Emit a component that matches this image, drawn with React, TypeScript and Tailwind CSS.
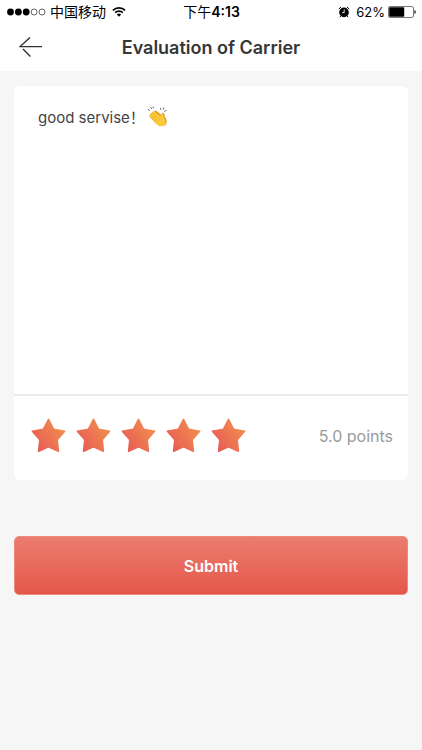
import { useState } from 'react';

const SCORES = [1, 2, 3, 4, 5];

function StatusBar() {
  return (
    <div className="grid h-6 grid-cols-[1fr_auto_1fr] items-center pr-1.5 pl-[7px] text-sm leading-6 text-black">
      <div className="flex items-center">
        <svg width="39" height="8" viewBox="0 0 39 8" aria-hidden="true">
          <circle cx="3.5" cy="4" r="3.4" />
          <circle cx="11.4" cy="4" r="3.4" />
          <circle cx="19.2" cy="4" r="3.4" />
          <circle cx="27.1" cy="4" r="3" fill="none" stroke="#222" strokeWidth="0.7" />
          <circle cx="35" cy="4" r="3" fill="none" stroke="#222" strokeWidth="0.7" />
        </svg>
        <span className="ml-1">中国移动</span>
        <svg className="ml-1.5" width="14" height="12" viewBox="0 0 15 12" fill="none" stroke="#000" strokeWidth="1.9" aria-hidden="true">
          <path d="M1 4.2a9.2 9.2 0 0 1 13 0" />
          <path d="M3.4 6.8a5.8 5.8 0 0 1 8.2 0" />
          <path d="M5.2 8.7a3.3 3.3 0 0 1 4.6 0L7.5 11z" fill="#000" stroke="none" />
        </svg>
      </div>
      <span>
        下午<span className="font-semibold">4:13</span>
      </span>
      <div className="flex items-center justify-end">
        <svg width="12" height="12" viewBox="0 0 12 12" aria-hidden="true">
          <circle cx="6" cy="6.4" r="4.8" />
          <path d="M.8 3.1 3 1M11.2 3.1 9 1M2.8 10l-1 1.2M9.2 10l1 1.2" stroke="#000" strokeWidth="1" />
          <path d="M6.2 3.4v3.2H4.2" fill="none" stroke="#fff" strokeWidth="0.9" />
        </svg>
        <span className="ml-1.5 text-[13px]">62%</span>
        <svg className="ml-[3px]" width="28" height="12" viewBox="0 0 28 12" aria-hidden="true">
          <rect x="0.5" y="0.5" width="25" height="11" rx="1.6" fill="none" stroke="#555" strokeWidth="0.8" />
          <rect x="1.2" y="1.2" width="15" height="9.6" rx="0.8" />
          <path d="M26.5 4c1.6.3 1.6 3.7 0 4z" />
        </svg>
      </div>
    </div>
  );
}

function Header() {
  return (
    <header className="grid h-[47px] grid-cols-[1fr_auto_1fr] items-center px-[19px]">
      <button type="button" aria-label="Back" className="justify-self-start">
        <svg width="24" height="22" viewBox="0 0 24 22" fill="none" stroke="#333" strokeWidth="1.4">
          <path d="M23 9.6H1.2L11 .4M4 12l7.4 7.4" />
        </svg>
      </button>
      <h1 className="text-lg leading-6 font-semibold text-[#363636]">Evaluation of Carrier</h1>
    </header>
  );
}

function ClapIcon() {
  return (
    <svg className="absolute top-5 left-[133px]" width="21" height="21" viewBox="0 0 21 21" aria-hidden="true">
      <path
        d="M1.3 3.6l1.3.7M3.8 1.5l.7 1.1M6.2 1l.1.9M13.5 2.2l.2 1.1M16.8 1.9l-.6 1.3M19 4.7l-1.3.4"
        stroke="#59656e"
        strokeWidth="1"
        strokeLinecap="round"
      />
      <path d="M7.2 5.2c.8-1.1 2.1-.7 3 .2L14.6 9c0-1.5.6-2.6 1.7-2.2 1.2.5 1.1 2.1 1.6 3.5.7 1.9 2 3.7 1.8 5.8-.1 1.4-.8 2.8-2 3.7L9 14z" fill="#e0a02a" />
      <path d="M2.7 10.8c-1.1-1-.3-2.3.7-2.2-.6-1.3.5-2.4 1.7-1.8-.2-1.5 1.4-2.2 2.6-1.1l5.9 5.1c.1-1.5.2-3.1 1.4-2.9 1.3.1 1.3 2 1.8 3.5.7 1.9 2 3.3 1.8 5.3-.2 2-1.9 3.6-4 3.6-2.5 0-4.5-1.5-6.5-3.4z" fill="#fcc93a" />
      <path d="M3.4 8.6l7 6.5M5.1 6.8l7.1 6.6M2.7 10.8l5.4 5.3" fill="none" stroke="#dfa02a" strokeWidth="0.6" strokeLinecap="round" />
    </svg>
  );
}

function Star({ filled }: { filled: boolean }) {
  return (
    <svg width="35" height="35" viewBox="0 0 35 35" aria-hidden="true">
      <defs>
        <linearGradient id="star" x1="0" y1="0.9" x2="1" y2="0.2">
          <stop offset="0.1" stopColor="#e85d55" />
          <stop offset="1" stopColor="#f2914e" />
        </linearGradient>
      </defs>
      <path
        d="M17.5 1.4 22.6 11.3 33.6 13.2 26.2 21.8 27.4 33.2 17.5 28.8 7.6 33.2 8.8 21.8 1.4 13.2 12.4 11.3z"
        fill={filled ? 'url(#star)' : '#ddd'}
        stroke={filled ? 'url(#star)' : '#ddd'}
        strokeWidth="1.6"
        strokeLinejoin="round"
      />
    </svg>
  );
}

export default function App() {
  const [comment, setComment] = useState('good servise！');
  const [score, setScore] = useState(5);

  return (
    <div className="min-h-screen bg-[#f6f6f6] font-['Inter','Noto_Sans_CJK_SC',sans-serif]">
      <div className="bg-white">
        <StatusBar />
        <Header />
      </div>
      <form className="px-3.5 pt-[15px]" onSubmit={(e) => e.preventDefault()}>
        <div className="overflow-hidden rounded-md bg-white">
          <div className="relative">
            <textarea
              aria-label="Comment"
              className="block h-[308px] w-full resize-none px-6 py-5 text-[15px] leading-6 text-[#444] outline-none"
              value={comment}
              onChange={(e) => setComment(e.target.value)}
            />
            <ClapIcon />
          </div>
          <div className="flex items-center justify-between border-t-2 border-[#ebebeb] pt-[22px] pr-[15px] pb-[27px] pl-[17px]">
            <fieldset aria-label="Rating" className="flex gap-2.5">
              {SCORES.map((n) => (
                <label key={n} className="relative cursor-pointer">
                  <input
                    type="radio"
                    name="score"
                    aria-label={`${n} points`}
                    className="sr-only"
                    checked={score === n}
                    onChange={() => setScore(n)}
                  />
                  <Star filled={n <= score} />
                </label>
              ))}
            </fieldset>
            <span className="text-base leading-6 text-[#9a9a9a]">{score.toFixed(1)} points</span>
          </div>
        </div>
        <button
          type="submit"
          className="mt-14 h-[59px] w-full rounded-[5px] border border-[#ec8a7e] bg-linear-to-b from-[#eb7c6e] to-[#e4574a] text-base font-semibold text-white"
        >
          Submit
        </button>
      </form>
    </div>
  );
}
